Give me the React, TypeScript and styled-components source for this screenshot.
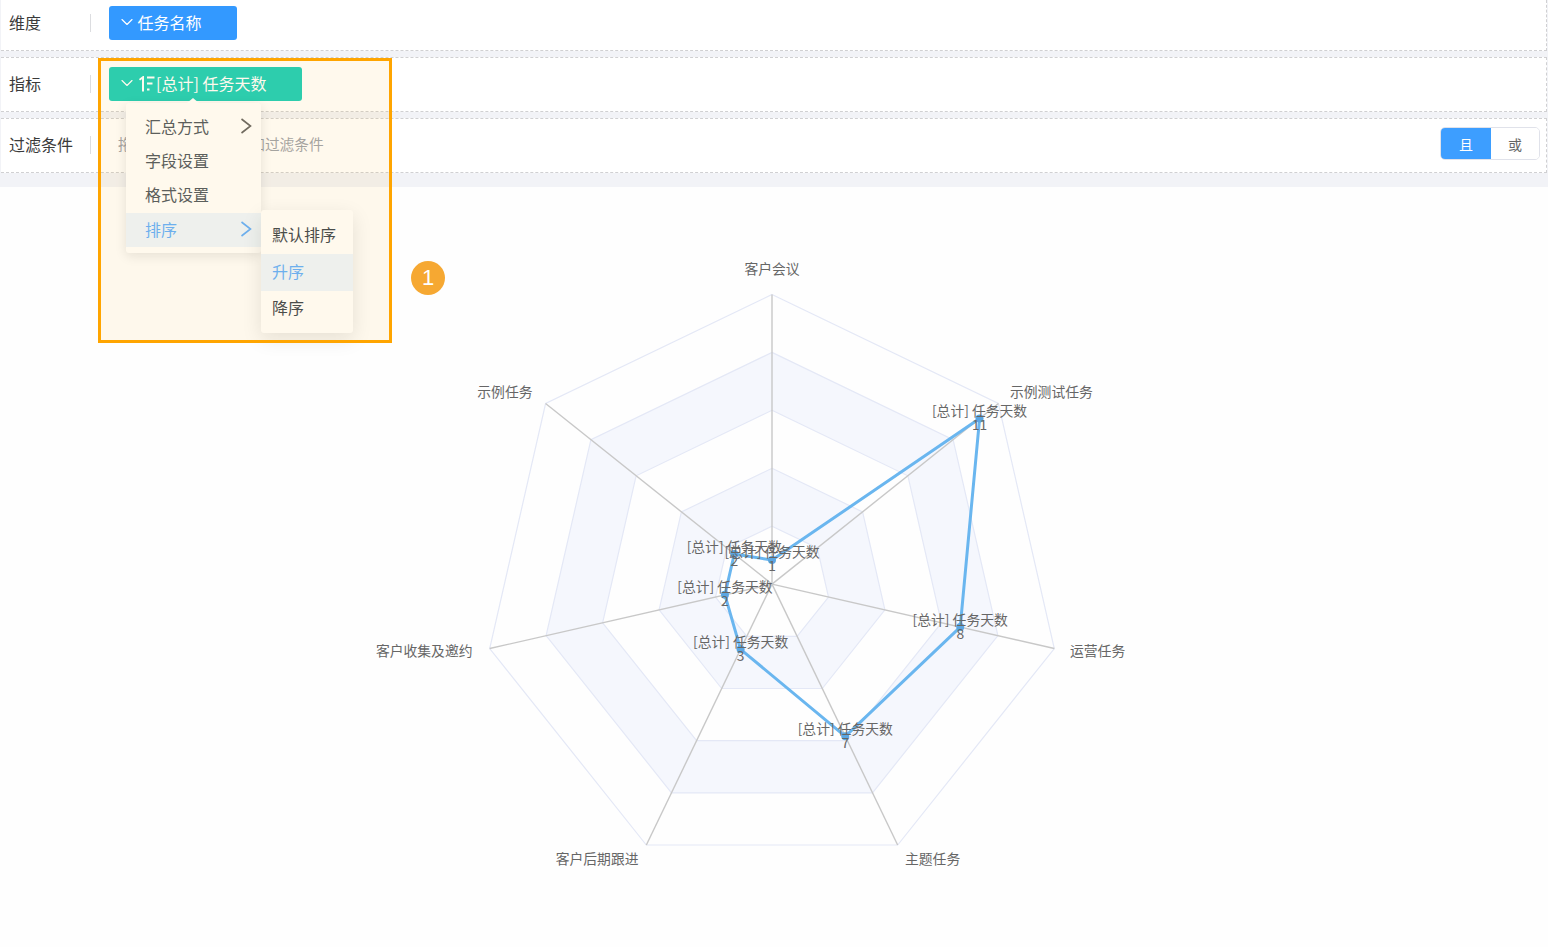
import React from "react";
import styled, { createGlobalStyle } from "styled-components";
import { ChevronDown } from "lucide-react";

const GlobalStyle = createGlobalStyle`
  html, body { margin: 0; padding: 0; height: 100%; background: #fefefe; }
  body { font-family: "Noto Sans CJK SC", "Noto Sans", sans-serif; color: #333; overflow: hidden; }
  #root { height: 100%; }
`;

const CX = 772;
const CY = 584.1;
const RADIUS = 289.6;
const MAX_VALUE = 12;
const OFFSET_TOP = 187;

const axes = [
  { name: "客户会议", value: 1, x: 772, y: 267.5, anchor: "middle" },
  { name: "示例测试任务", value: 11, x: 1010, y: 390.5, anchor: "start" },
  { name: "运营任务", value: 8, x: 1070, y: 649.5, anchor: "start" },
  { name: "主题任务", value: 7, x: 905, y: 857.5, anchor: "start" },
  { name: "客户后期跟进", value: 3, x: 638.5, y: 857.5, anchor: "end" },
  { name: "客户收集及邀约", value: 2, x: 472.5, y: 649.5, anchor: "end" },
  { name: "示例任务", value: 2, x: 532.5, y: 390.5, anchor: "end" },
];

const polar = (i: number, r: number) => {
  const a = (i * 2 * Math.PI) / axes.length;
  return [CX + r * Math.sin(a), CY - r * Math.cos(a)];
};

const ringPoints = (r: number) =>
  axes.map((_, i) => polar(i, r).map((n) => n.toFixed(1)).join(",")).join(" ");

const Page = styled.div`
  position: relative;
  height: 947px;
  display: flex;
  flex-direction: column;
`;

const Filters = styled.div`
  height: 187px;
  background: #f2f3f7;
  display: flex;
  flex-direction: column;
  gap: 6px;
  padding-right: 1px;
  box-sizing: border-box;
`;

const Row = styled.div<{ $height: number }>`
  height: ${(p) => p.$height}px;
  box-sizing: border-box;
  flex-shrink: 0;
  background: #fff;
  border-bottom: 1px dashed #d0d0d2;
  border-top: 1px dashed #d0d0d2;
  border-right: 1px dashed #d0d0d2;
  display: flex;
  align-items: center;
  padding: 0 6px 1px 9px;
  margin-left: 1px;
`;

const FirstRow = styled(Row)`
  border-top: none;
  padding-bottom: 4px;
`;

const RowLabel = styled.div`
  width: 81px;
  height: 18px;
  line-height: 16px;
  font-size: 16px;
  color: #3a3a3a;
  border-right: 1px solid #dcdde0;
  margin-right: 18px;
  flex-shrink: 0;
  margin-left: -1px;
`;

const Chip = styled.div<{ $color: string; $width: number }>`
  width: ${(p) => p.$width}px;
  height: 34.5px;
  box-sizing: border-box;
  border-radius: 3px;
  background: ${(p) => p.$color};
  color: #fff;
  font-size: 16px;
  display: flex;
  align-items: center;
  padding: 0 0 2px 7.5px;
  white-space: nowrap;
`;

const ChipIcon = styled.svg`
  margin: 2px 1px 0 1.5px;
  flex-shrink: 0;
`;

const Placeholder = styled.div`
  font-size: 14.7px;
  line-height: 18px;
  padding-bottom: 2px;
  color: #9fa4ad;
  flex: 1;
  margin-left: 9px;
  white-space: nowrap;
`;

const Toggle = styled.div`
  display: flex;
  height: 33px;
  margin-bottom: 3px;
  border: 1px solid #e0e2ea;
  border-radius: 5px;
  overflow: hidden;
  box-sizing: border-box;
  background: #fff;
`;

const ToggleItem = styled.div<{ $active?: boolean }>`
  width: ${(p) => (p.$active ? 50 : 48)}px;
  display: flex;
  align-items: center;
  justify-content: center;
  font-size: 14px;
  background: ${(p) => (p.$active ? "#3d9eff" : "#fff")};
  color: ${(p) => (p.$active ? "#fff" : "#666")};
`;

const ChartArea = styled.div`
  flex: 1;
  background: #fefefe;
`;

const ChartSvg = styled.svg`
  display: block;
  width: 100%;
  height: 100%;
  font-family: "Noto Sans CJK SC", "Noto Sans", sans-serif;
`;

const AxisName = styled.text`
  font-size: 13.8px;
  fill: #666;
`;

const DataLabel = styled.text`
  font-size: 13.8px;
  fill: #666;
  text-anchor: middle;
`;

const Menu = styled.div`
  position: absolute;
  left: 126px;
  top: 103px;
  width: 135px;
  height: 150px;
  box-sizing: border-box;
  padding-top: 6.5px;
  background: #fff;
  border-radius: 3px;
  box-shadow: 0 3px 12px rgba(0, 0, 0, 0.1);
  z-index: 2;
`;

const Caret = styled.div`
  position: absolute;
  left: 61px;
  top: -5px;
  width: 0;
  height: 0;
  border-left: 6px solid transparent;
  border-right: 6px solid transparent;
  border-bottom: 5px solid #fff;
`;

const MenuItem = styled.div<{ $active?: boolean }>`
  height: 34.4px;
  box-sizing: border-box;
  display: flex;
  align-items: center;
  justify-content: space-between;
  padding: 0 9px 2px 19px;
  font-size: 16px;
  color: ${(p) => (p.$active ? "#62b0ff" : "#505a64")};
  background: ${(p) => (p.$active ? "#edf6ff" : "transparent")};
`;

const SubMenu = styled.div`
  position: absolute;
  left: 261px;
  top: 210px;
  width: 92px;
  height: 123px;
  box-sizing: border-box;
  padding-top: 7.5px;
  background: #fff;
  border-radius: 3px;
  box-shadow: 0 6px 20px rgba(0, 0, 0, 0.1);
  z-index: 2;
`;

const SubItem = styled.div<{ $active?: boolean }>`
  height: 36.5px;
  box-sizing: border-box;
  display: flex;
  align-items: center;
  padding: 0 0 3px 11px;
  font-size: 16px;
  color: ${(p) => (p.$active ? "#62b0ff" : "#3d4650")};
  background: ${(p) => (p.$active ? "#edf6ff" : "transparent")};
`;

const Highlight = styled.div`
  position: absolute;
  left: 98px;
  top: 58px;
  width: 294px;
  height: 285px;
  box-sizing: border-box;
  border: 3px solid #ffa500;
  background: rgba(255, 165, 0, 0.07);
  pointer-events: none;
  z-index: 3;
`;

const Badge = styled.div`
  position: absolute;
  left: 411px;
  top: 261px;
  width: 34px;
  height: 34px;
  border-radius: 50%;
  background: #f6a832;
  color: #fff;
  font-size: 22px;
  line-height: 34px;
  text-align: center;
  font-family: "Liberation Sans", sans-serif;
  z-index: 3;
`;

const SortIcon = () => (
  <ChipIcon width="16" height="16" viewBox="0 0 16 16" fill="none" stroke="#fff" strokeWidth="1.8">
    <path d="M0.5 3.8 L4 1.2 V15.5" strokeWidth="2" />
    <path d="M8 1.5 H15.5 M8 7.5 H13.5 M8 13.5 H10.5" />
  </ChipIcon>
);

const Arrow = ({ color }: { color: string }) => (
  <svg width="12" height="16" viewBox="0 0 12 16" fill="none" stroke={color} strokeWidth="1.6">
    <path d="M1.5 1 L10.5 8 L1.5 15" />
  </svg>
);

const ChipChevron = () => <ChevronDown size={20} color="#fff" strokeWidth={1.4} style={{ marginRight: 1 }} />;

export default function App() {
  const step = RADIUS / MAX_VALUE;
  const line = axes.map((a, i) => polar(i, a.value * step).map((n) => n.toFixed(1)).join(",")).join(" ");

  return (
    <Page>
      <GlobalStyle />
      <Filters>
        <FirstRow $height={51}>
          <RowLabel>维度</RowLabel>
          <Chip $color="#3399ff" $width={128}>
            <ChipChevron />
            任务名称
          </Chip>
        </FirstRow>
        <Row $height={55}>
          <RowLabel>指标</RowLabel>
          <Chip $color="#1ed0bb" $width={193}>
            <ChipChevron />
            <SortIcon />
            <span>[总计] 任务天数</span>
          </Chip>
        </Row>
        <Row $height={55}>
          <RowLabel>过滤条件</RowLabel>
          <Placeholder>拖拽字段到此区域添加过滤条件</Placeholder>
          <Toggle>
            <ToggleItem $active>且</ToggleItem>
            <ToggleItem>或</ToggleItem>
          </Toggle>
        </Row>
      </Filters>

      <ChartArea>
        <ChartSvg viewBox={`0 ${OFFSET_TOP} 1548 760`}>
          {[1, 0.8, 0.6, 0.4, 0.2].map((f, i) => (
            <polygon
              key={f}
              points={ringPoints(RADIUS * f)}
              fill={i % 2 === 1 ? "#f5f7fd" : "#fefefe"}
              stroke="#e4e8f6"
              strokeWidth="1.2"
            />
          ))}
          {axes.map((a, i) => {
            const [x, y] = polar(i, RADIUS);
            return <line key={a.name} x1={CX} y1={CY} x2={x} y2={y} stroke="#c8c8c8" strokeWidth="1.4" />;
          })}
          <polygon points={line} fill="none" stroke="#6ab6ef" strokeWidth="3" strokeLinejoin="round" />
          {axes.map((a, i) => {
            const [x, y] = polar(i, a.value * step);
            return <circle key={a.name} cx={x} cy={y} r="4" fill="#5ba6e2" />;
          })}
          {axes.map((a, i) => {
            const [x, y] = polar(i, a.value * step);
            return (
              <g key={a.name}>
                <DataLabel x={x} y={y - 8.5} dominantBaseline="central">[总计] 任务天数</DataLabel>
                <DataLabel x={x} y={y + 5.5} dominantBaseline="central">{a.value}</DataLabel>
              </g>
            );
          })}
          {axes.map((a) => (
            <AxisName key={a.name} x={a.x} y={a.y} textAnchor={a.anchor} dominantBaseline="central">
              {a.name}
            </AxisName>
          ))}
        </ChartSvg>
      </ChartArea>

      <Menu>
        <Caret />
        <MenuItem>汇总方式<Arrow color="#666" /></MenuItem>
        <MenuItem>字段设置</MenuItem>
        <MenuItem>格式设置</MenuItem>
        <MenuItem $active>排序<Arrow color="#62b0ff" /></MenuItem>
      </Menu>
      <SubMenu>
        <SubItem>默认排序</SubItem>
        <SubItem $active>升序</SubItem>
        <SubItem>降序</SubItem>
      </SubMenu>
      <Highlight />
      <Badge>1</Badge>
    </Page>
  );
}
